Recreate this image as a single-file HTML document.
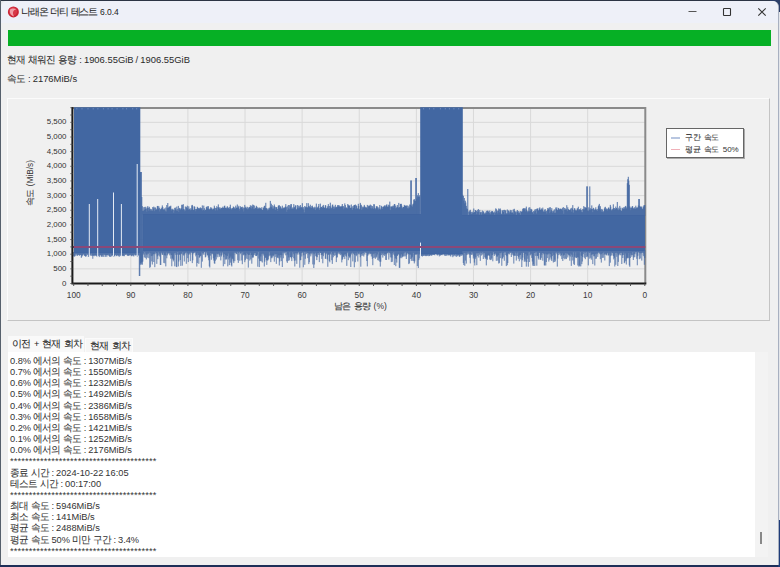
<!DOCTYPE html>
<html><head><meta charset="utf-8"><style>
*{margin:0;padding:0;box-sizing:border-box}
html,body{width:780px;height:567px;overflow:hidden}
body{background:#e4e6ea;font-family:"Liberation Sans",sans-serif;color:#1e1e1e;position:relative}
.win{position:absolute;left:1px;top:1px;width:778px;height:564px;background:#f0f0f0;border-radius:6px 6px 0 0;overflow:hidden;border-right:1px solid #a8b0c0}
.edge{position:absolute}
.title{position:absolute;left:0;top:0;width:778px;height:22px;background:#eef0f8}
.icon{position:absolute;left:7px;top:6.5px;width:10.5px;height:10.5px;border-radius:50%;background:radial-gradient(circle at 40% 35%,#f06060,#c81e1e 70%,#a01515)}
.ttext{position:absolute;left:19.7px;top:4.2px;word-spacing:-0.8px;font-size:8.5px;line-height:14px;color:#222;white-space:nowrap}
.green{position:absolute;left:7px;top:29px;width:763px;height:16px;background:#06b025}
.info{position:absolute;left:6px;font-size:9.7px;line-height:12px;white-space:nowrap;color:#2a2a2a;word-spacing:-0.55px;transform:scaleX(0.97);transform-origin:0 0}
.panel{position:absolute;left:7px;top:98px;width:763px;height:223px;border-top:1px solid #fbfbfb;border-left:1px solid #fbfbfb;border-right:1px solid #c4c4c4;border-bottom:1px solid #c4c4c4}
.plot{position:absolute;left:0;top:0}
.yl{position:absolute;left:20px;width:46.5px;text-align:right;font-size:7.9px;line-height:12px;color:#333}
.xl{position:absolute;top:289px;width:30px;text-align:center;font-size:8.3px;line-height:12px;color:#3a3a3a}
.xt{position:absolute;left:334px;top:300px;font-size:8.5px;line-height:12px;color:#333;white-space:nowrap}
.yt{position:absolute;left:5.2px;top:177px;width:50px;text-align:center;font-size:8.3px;color:#555;line-height:12px;color:#333;white-space:nowrap;transform:rotate(-90deg)}
.legend{position:absolute;left:666px;top:128px;width:78px;height:30px;background:#fff;border:1px solid #666;box-shadow:1px 1px 0 #aaa}
.lg{position:absolute;left:18px;font-size:8px;line-height:10px;white-space:nowrap;color:#333;word-spacing:1px}
.lgl{position:absolute;left:4px;width:9px;height:1.5px}
.tab1{position:absolute;left:8px;top:336px;width:76px;height:17px;background:#f9f9f9;font-size:9.2px;line-height:16px;padding-left:4px;white-space:nowrap;color:#222}
.tab2{position:absolute;left:85px;top:338px;width:48px;height:14px;background:#f6f6f6;border:1px solid #fbfbfb;border-bottom:none;font-size:9.2px;line-height:13px;padding-left:4px;white-space:nowrap;color:#222}
.text{position:absolute;left:8px;top:352px;width:747px;height:205px;background:#fff}
.scroll{position:absolute;left:755px;top:352px;width:13px;height:205px;background:#f3f3f3}
.thumb{position:absolute;left:760px;top:532px;width:1.5px;height:12px;background:#888}
.log{position:absolute;left:9.5px;top:355px;font-size:9.6px;line-height:11.17px;white-space:nowrap;color:#333;word-spacing:-0.6px;transform:scaleX(0.965);transform-origin:0 0}
.ln{height:11.17px}
.ast{letter-spacing:0.16px}
.h{-webkit-text-stroke:0.08px #333}
</style></head><body>
<div class="edge" style="left:0;top:0;width:780px;height:1px;background:#2c3444"></div>
<div class="edge" style="left:0;top:0;width:1px;height:567px;background:#56606c"></div>
<div class="edge" style="left:770px;top:0;width:10px;height:12px;background:#2c3f6a"></div>
<div class="edge" style="left:0;top:565px;width:780px;height:2px;background:#1e2f58"></div>
<div class="edge" style="left:778px;top:520px;width:2px;height:47px;background:#1e3c78"></div>
<div class="win">
 <div class="title">
  <svg style="position:absolute;left:5.2px;top:4.3px" width="14" height="14" viewBox="0 0 14 14">
   <circle cx="7.4" cy="6.9" r="5.5" fill="#c92435"/>
   <circle cx="7.0" cy="6.4" r="4.2" fill="#d83848"/>
   <path d="M4.2 4.5C5.5 3.2 8.5 3.0 10.2 4.2C8.6 4.6 7.2 5.6 7.0 7.4C6.8 9 7.6 10.5 8.2 11.5C6 11.2 4.4 9.6 4.0 7.6C3.8 6.4 3.9 5.2 4.2 4.5Z" fill="#f8c0c8" opacity="0.75"/>
  </svg>
  <div class="ttext"><span class="h" style="font-size:9.6px;position:relative;top:0px"><span style="letter-spacing:-1.1px">나래</span>온</span> <span class="h" style="font-size:9.6px;position:relative;top:0px"><span style="letter-spacing:-1.1px">더</span>티</span> <span class="h" style="font-size:9.6px;position:relative;top:0px"><span style="letter-spacing:-1.1px">테스</span>트</span> 6.0.4</div>
  <svg style="position:absolute;left:0;top:0" width="778" height="22">
   <path d="M687.5 10.5H695.5" stroke="#555" stroke-width="1"/>
   <rect x="722.5" y="7.5" width="7" height="7" rx="0.6" stroke="#333" stroke-width="1.1" fill="none"/>
   <path d="M757.3 7.3L764.7 14.7M764.7 7.3L757.3 14.7" stroke="#333" stroke-width="1.1"/>
  </svg>
 </div>
 <div class="green"></div>
 <div class="info" style="top:53px"><span class="h" style="font-size:10.2px;position:relative;top:0px"><span style="letter-spacing:-0.5px">현</span>재</span> <span class="h" style="font-size:10.2px;position:relative;top:0px"><span style="letter-spacing:-0.5px">채워</span>진</span> <span class="h" style="font-size:10.2px;position:relative;top:0px"><span style="letter-spacing:-0.5px">용</span>량</span> : 1906.55GiB / 1906.55GiB</div>
 <div class="info" style="top:72px"><span class="h" style="font-size:10.2px;position:relative;top:0px"><span style="letter-spacing:-0.5px">속</span>도</span> : 2176MiB/s</div>
</div>
<div class="panel"></div>
<svg class="plot" width="780" height="330" viewBox="0 0 780 330">
<path d="M72.4 268.85H645.3M72.4 254.20H645.3M72.4 239.55H645.3M72.4 224.90H645.3M72.4 210.25H645.3M72.4 195.60H645.3M72.4 180.95H645.3M72.4 166.30H645.3M72.4 151.65H645.3M72.4 137.00H645.3M72.4 122.35H645.3M587.69 108.0V283.5M530.58 108.0V283.5M473.47 108.0V283.5M416.36 108.0V283.5M359.25 108.0V283.5M302.14 108.0V283.5M245.03 108.0V283.5M187.92 108.0V283.5M130.81 108.0V283.5" stroke="#d9d9d9" stroke-width="1" fill="none"/>
<path d="M72.4 108.0H645.3V283.5" stroke="#8a8a8a" stroke-width="2" fill="none"/>
<path d="M74 107.3H140.3V253H74ZM143 214H420.5V251H143ZM420.2 107.3H462.8V254H420.2ZM462.8 215H645V251H462.8Z" fill="#4267a2"/>
<path d="M140.30 172.1V264.7M140.80 172.0V263.0M141.30 172.0V264.5M141.80 197.0V262.2M142.30 206.2V264.7M142.80 211.0V261.6M143.30 210.8V215M143.80 207.2V215M144.30 209.9V215M144.80 206.9V215M145.30 208.8V215M145.80 206.8V215M146.30 208.5V215M146.80 211.5V215M147.30 207.6V215M147.80 206.1V215M148.30 207.8V215M148.80 210.8V215M149.30 206.8V215M149.80 208.5V215M150.30 210.6V215M150.80 208.9V215M151.30 209.3V215M151.80 210.9V215M152.30 210.7V215M152.80 207.0V215M153.30 208.4V215M153.80 206.6V215M154.30 211.1V215M154.80 207.5V215M155.30 207.5V215M155.80 210.1V215M156.30 208.7V215M156.80 210.0V215M157.30 206.1V215M157.80 205.9V215M158.30 208.7V215M158.80 206.2V215M159.30 207.8V215M159.80 211.3V215M160.30 209.1V215M160.80 209.5V215M161.30 207.7V215M161.80 208.9V215M162.30 205.4V215M162.80 207.1V215M163.30 209.9V215M163.80 209.1V215M164.30 208.4V215M164.80 209.9V215M165.30 211.2V215M165.80 207.5V215M166.30 211.4V215M166.80 205.0V215M167.30 208.1V215M167.80 203.0V215M168.30 207.7V215M168.80 207.4V215M169.30 206.3V215M169.80 207.0V215M170.30 206.4V215M170.80 205.7V215M171.30 210.5V215M171.80 208.8V215M172.30 210.0V215M172.80 208.8V215M173.30 209.7V215M173.80 212.8V215M174.30 210.4V215M174.80 207.9V215M175.30 207.6V215M175.80 209.2V215M176.30 210.5V215M176.80 206.6V215M177.30 210.9V215M177.80 208.9V215M178.30 205.9V215M178.80 211.8V215M179.30 207.9V215M179.80 208.7V215M180.30 210.1V215M180.80 208.5V215M181.30 208.4V215M181.80 204.8V215M182.30 204.8V215M182.80 209.6V215M183.30 204.2V215M183.80 209.0V215M184.30 209.6V215M184.80 211.2V215M185.30 206.5V215M185.80 210.6V215M186.30 206.9V215M186.80 207.9V215M187.30 205.7V215M187.80 208.4V215M188.30 209.8V215M188.80 206.3V215M189.30 208.7V215M189.80 209.5V215M190.30 210.3V215M190.80 208.2V215M191.30 209.7V215M191.80 205.4V215M192.30 204.9V215M192.80 206.3V215M193.30 210.1V215M193.80 209.7V215M194.30 206.3V215M194.80 206.8V215M195.30 209.1V215M195.80 211.2V215M196.30 209.1V215M196.80 208.8V215M197.30 206.8V215M197.80 207.6V215M198.30 208.3V215M198.80 208.4V215M199.30 208.4V215M199.80 208.5V215M200.30 207.3V215M200.80 208.2V215M201.30 209.3V215M201.80 208.0V215M202.30 205.4V215M202.80 210.6V215M203.30 210.0V215M203.80 205.6V215M204.30 208.2V215M204.80 210.9V215M205.30 209.9V215M205.80 209.7V215M206.30 207.2V215M206.80 206.6V215M207.30 208.5V215M207.80 206.3V215M208.30 206.2V215M208.80 208.9V215M209.30 210.0V215M209.80 208.8V215M210.30 208.6V215M210.80 207.1V215M211.30 208.7V215M211.80 207.8V215M212.30 209.3V215M212.80 209.7V215M213.30 208.5V215M213.80 209.0V215M214.30 205.7V215M214.80 207.6V215M215.30 210.5V215M215.80 208.0V215M216.30 208.2V215M216.80 206.2V215M217.30 210.3V215M217.80 207.2V215M218.30 204.4V215M218.80 207.7V215M219.30 207.3V215M219.80 209.0V215M220.30 209.2V215M220.80 207.5V215M221.30 208.0V215M221.80 208.3V215M222.30 207.9V215M222.80 206.7V215M223.30 208.0V215M223.80 207.7V215M224.30 206.0V215M224.80 205.6V215M225.30 207.9V215M225.80 207.8V215M226.30 207.6V215M226.80 208.7V215M227.30 206.2V215M227.80 207.3V215M228.30 208.2V215M228.80 207.7V215M229.30 209.0V215M229.80 206.9V215M230.30 204.7V215M230.80 208.5V215M231.30 208.5V215M231.80 209.8V215M232.30 208.2V215M232.80 208.2V215M233.30 206.5V215M233.80 207.0V215M234.30 208.6V215M234.80 207.6V215M235.30 209.0V215M235.80 205.7V215M236.30 207.5V215M236.80 208.0V215M237.30 204.5V215M237.80 207.8V215M238.30 207.2V215M238.80 205.8V215M239.30 208.7V215M239.80 210.6V215M240.30 206.2V215M240.80 207.9V215M241.30 207.0V215M241.80 207.8V215M242.30 206.7V215M242.80 209.1V215M243.30 207.5V215M243.80 211.4V215M244.30 207.9V215M244.80 204.9V215M245.30 207.7V215M245.80 206.7V215M246.30 207.8V215M246.80 208.9V215M247.30 206.8V215M247.80 209.6V215M248.30 208.5V215M248.80 207.5V215M249.30 207.2V215M249.80 207.1V215M250.30 205.3V215M250.80 207.7V215M251.30 205.7V215M251.80 208.6V215M252.30 206.7V215M252.80 204.5V215M253.30 205.1V215M253.80 209.1V215M254.30 205.5V215M254.80 209.0V215M255.30 208.1V215M255.80 207.6V215M256.30 205.8V215M256.80 206.7V215M257.30 208.8V215M257.80 207.3V215M258.30 208.9V215M258.80 208.1V215M259.30 207.5V215M259.80 208.8V215M260.30 207.8V215M260.80 208.5V215M261.30 209.2V215M261.80 207.2V215M262.30 209.9V215M262.80 209.9V215M263.30 207.6V215M263.80 207.7V215M264.30 206.0V215M264.80 205.7V215M265.30 207.8V215M265.80 202.8V215M266.30 208.3V215M266.80 208.1V215M267.30 209.3V215M267.80 210.7V215M268.30 208.4V215M268.80 210.0V215M269.30 207.6V215M269.80 208.4V215M270.30 200.9V215M270.80 206.7V215M271.30 203.7V215M271.80 207.2V215M272.30 205.2V215M272.80 208.8V215M273.30 208.5V215M273.80 206.2V215M274.30 204.5V215M274.80 206.4V215M275.30 209.9V215M275.80 207.1V215M276.30 207.6V215M276.80 207.0V215M277.30 208.9V215M277.80 211.0V215M278.30 205.6V215M278.80 205.6V215M279.30 205.2V215M279.80 208.1V215M280.30 206.2V215M280.80 206.9V215M281.30 209.0V215M281.80 208.1V215M282.30 205.7V215M282.80 208.9V215M283.30 207.6V215M283.80 208.3V215M284.30 207.6V215M284.80 207.6V215M285.30 206.6V215M285.80 204.1V215M286.30 207.2V215M286.80 211.7V215M287.30 206.3V215M287.80 209.9V215M288.30 205.0V215M288.80 208.3V215M289.30 205.1V215M289.80 209.3V215M290.30 206.4V215M290.80 204.3V215M291.30 204.1V215M291.80 208.8V215M292.30 208.6V215M292.80 207.3V215M293.30 208.6V215M293.80 204.1V215M294.30 206.9V215M294.80 207.9V215M295.30 205.3V215M295.80 205.7V215M296.30 209.9V215M296.80 208.9V215M297.30 205.0V215M297.80 207.6V215M298.30 205.6V215M298.80 208.4V215M299.30 207.5V215M299.80 206.1V215M300.30 205.0V215M300.80 207.4V215M301.30 207.7V215M301.80 206.9V215M302.30 203.2V215M302.80 208.3V215M303.30 207.1V215M303.80 209.4V215M304.30 212.3V215M304.80 206.0V215M305.30 207.4V215M305.80 206.7V215M306.30 207.3V215M306.80 203.1V215M307.30 207.1V215M307.80 208.0V215M308.30 203.2V215M308.80 206.0V215M309.30 206.4V215M309.80 207.4V215M310.30 204.7V215M310.80 207.4V215M311.30 208.0V215M311.80 206.1V215M312.30 205.6V215M312.80 207.2V215M313.30 207.5V215M313.80 209.0V215M314.30 207.8V215M314.80 206.7V215M315.30 210.1V215M315.80 207.4V215M316.30 203.6V215M316.80 208.5V215M317.30 207.3V215M317.80 207.7V215M318.30 206.2V215M318.80 204.0V215M319.30 209.9V215M319.80 208.1V215M320.30 203.6V215M320.80 207.5V215M321.30 206.9V215M321.80 206.9V215M322.30 208.0V215M322.80 205.9V215M323.30 204.9V215M323.80 207.0V215M324.30 208.0V215M324.80 207.7V215M325.30 205.1V215M325.80 205.6V215M326.30 208.4V215M326.80 208.3V215M327.30 207.6V215M327.80 206.2V215M328.30 204.1V215M328.80 208.5V215M329.30 206.0V215M329.80 208.5V215M330.30 202.7V215M330.80 206.4V215M331.30 208.5V215M331.80 207.7V215M332.30 204.8V215M332.80 204.6V215M333.30 206.6V215M333.80 209.0V215M334.30 206.5V215M334.80 208.3V215M335.30 204.8V215M335.80 207.3V215M336.30 206.9V215M336.80 207.6V215M337.30 206.4V215M337.80 205.0V215M338.30 205.2V215M338.80 206.7V215M339.30 205.4V215M339.80 206.9V215M340.30 206.2V215M340.80 207.0V215M341.30 206.7V215M341.80 205.8V215M342.30 204.0V215M342.80 206.5V215M343.30 206.1V215M343.80 209.2V215M344.30 207.5V215M344.80 203.4V215M345.30 205.1V215M345.80 208.1V215M346.30 207.3V215M346.80 208.1V215M347.30 208.5V215M347.80 204.0V215M348.30 204.9V215M348.80 205.9V215M349.30 206.0V215M349.80 205.2V215M350.30 208.0V215M350.80 207.7V215M351.30 204.5V215M351.80 207.6V215M352.30 209.8V215M352.80 206.2V215M353.30 208.0V215M353.80 205.5V215M354.30 205.1V215M354.80 205.0V215M355.30 204.5V215M355.80 209.1V215M356.30 205.4V215M356.80 206.2V215M357.30 208.2V215M357.80 209.0V215M358.30 203.8V215M358.80 206.0V215M359.30 209.6V215M359.80 208.8V215M360.30 202.9V215M360.80 204.5V215M361.30 205.2V215M361.80 209.9V215M362.30 206.7V215M362.80 208.3V215M363.30 206.6V215M363.80 207.6V215M364.30 204.9V215M364.80 206.2V215M365.30 207.1V215M365.80 207.8V215M366.30 207.7V215M366.80 207.3V215M367.30 204.9V215M367.80 208.7V215M368.30 205.7V215M368.80 206.8V215M369.30 205.6V215M369.80 205.8V215M370.30 204.6V215M370.80 208.1V215M371.30 205.4V215M371.80 208.7V215M372.30 206.0V215M372.80 207.6V215M373.30 209.0V215M373.80 204.2V215M374.30 204.3V215M374.80 207.8V215M375.30 209.3V215M375.80 208.3V215M376.30 206.1V215M376.80 206.8V215M377.30 206.4V215M377.80 208.2V215M378.30 209.6V215M378.80 207.3V215M379.30 208.8V215M379.80 205.0V215M380.30 209.9V215M380.80 208.6V215M381.30 205.8V215M381.80 206.6V215M382.30 208.9V215M382.80 207.1V215M383.30 206.4V215M383.80 207.0V215M384.30 205.8V215M384.80 205.3V215M385.30 207.1V215M385.80 205.7V215M386.30 205.2V215M386.80 204.3V215M387.30 206.5V215M387.80 206.9V215M388.30 204.7V215M388.80 206.6V215M389.30 205.3V215M389.80 201.6V215M390.30 210.1V215M390.80 206.5V215M391.30 206.5V215M391.80 206.6V215M392.30 207.2V215M392.80 205.8V215M393.30 205.6V215M393.80 207.7V215M394.30 204.1V215M394.80 204.0V215M395.30 205.6V215M395.80 208.4V215M396.30 208.0V215M396.80 206.7V215M397.30 205.0V215M397.80 206.9V215M398.30 207.9V215M398.80 202.9V215M399.30 207.5V215M399.80 207.0V215M400.30 203.9V215M400.80 204.1V215M401.30 203.8V215M401.80 205.7V215M402.30 208.3V215M402.80 207.4V215M403.30 207.0V215M403.80 206.9V215M404.30 204.9V215M404.80 205.9V215M405.30 205.6V215M405.80 205.8V215M406.30 206.2V215M406.80 205.3V215M407.30 208.2V215M407.80 205.6V215M408.30 208.4V215M408.80 206.3V215M409.30 207.6V215M409.80 204.5V215M410.30 204.8V215M410.80 180.5V215M411.30 180.5V215M411.80 205.6V215M412.30 206.7V215M412.80 204.4V215M413.30 203.6V215M413.80 199.7V215M414.30 199.1V215M414.80 200.5V215M415.30 201.0V215M415.80 178.0V215M416.30 178.0V215M416.80 198.6V215M417.30 195.2V215M417.80 196.6V215M418.30 193.1V215M418.80 196.7V215M419.30 196.6V215M419.80 195.2V215M462.80 194.8V216M463.30 196.0V216M463.80 200.6V216M464.30 198.0V216M464.80 203.4V216M465.30 200.7V216M465.80 202.5V216M466.30 205.9V216M466.80 208.4V216M467.30 209.0V216M467.80 189.0V216M468.80 211.6V216M469.30 210.6V216M469.80 212.2V216M470.30 209.8V216M470.80 211.5V216M471.30 213.9V216M471.80 211.9V216M472.30 213.4V216M472.80 211.6V216M473.30 213.0V216M473.80 208.5V216M474.30 212.2V216M474.80 212.1V216M475.30 210.2V216M475.80 210.1V216M476.30 211.0V216M476.80 214.2V216M477.30 211.7V216M477.80 210.0V216M478.30 209.0V216M478.80 211.5V216M479.30 214.7V216M479.80 209.9V216M480.30 212.0V216M480.80 212.8V216M481.30 214.6V216M481.80 211.9V216M482.30 210.5V216M482.80 213.4V216M483.30 211.4V216M483.80 211.6V216M484.30 213.9V216M484.80 213.2V216M485.30 213.6V216M485.80 212.3V216M486.30 210.8V216M486.80 213.1V216M487.30 211.0V216M487.80 210.4V216M488.30 211.8V216M488.80 211.3V216M489.30 213.1V216M489.80 210.5V216M490.30 214.2V216M490.80 212.3V216M491.30 212.0V216M491.80 210.9V216M492.30 211.0V216M492.80 211.7V216M493.30 212.5V216M493.80 212.8V216M494.30 211.4V216M494.80 214.9V216M495.30 212.6V216M495.80 208.3V216M496.30 209.2V216M496.80 211.6V216M497.30 210.6V216M497.80 213.4V216M498.30 210.7V216M498.80 208.4V216M499.30 209.2V216M499.80 212.4V216M500.30 208.5V216M500.80 210.2V216M501.30 213.7V216M501.80 214.3V216M502.30 210.6V216M502.80 210.2V216M503.30 212.0V216M503.80 210.1V216M504.30 209.8V216M504.80 214.1V216M505.30 210.5V216M505.80 210.3V216M506.30 213.6V216M506.80 213.3V216M507.30 209.5V216M507.80 213.5V216M508.30 210.4V216M508.80 210.9V216M509.30 213.4V216M509.80 211.6V216M510.30 209.9V216M510.80 211.5V216M511.30 212.8V216M511.80 210.2V216M512.30 212.5V216M512.80 212.6V216M513.30 209.4V216M513.80 213.8V216M514.30 208.8V216M514.80 211.0V216M515.30 211.5V216M515.80 212.5V216M516.30 214.9V216M516.80 211.3V216M517.30 210.0V216M517.80 211.9V216M518.30 211.1V216M518.80 213.1V216M519.30 213.1V216M519.80 211.4V216M520.30 214.8V216M520.80 211.0V216M521.30 211.6V216M521.80 212.0V216M522.30 211.2V216M522.80 208.8V216M523.30 208.4V216M523.80 208.3V216M524.30 209.3V216M524.80 208.1V216M525.30 211.3V216M525.80 208.5V216M526.30 206.6V216M526.80 209.8V216M527.30 211.2V216M527.80 212.3V216M528.30 211.2V216M528.80 207.6V216M529.30 211.3V216M529.80 207.2V216M530.30 211.1V216M530.80 208.8V216M531.30 209.4V216M531.80 209.5V216M532.30 212.3V216M532.80 212.2V216M533.30 211.0V216M533.80 213.9V216M534.30 211.4V216M534.80 209.5V216M535.30 210.8V216M535.80 209.1V216M536.30 213.5V216M536.80 208.7V216M537.30 209.0V216M537.80 208.2V216M538.30 210.8V216M538.80 210.1V216M539.30 208.5V216M539.80 207.4V216M540.30 209.7V216M540.80 209.9V216M541.30 208.4V216M541.80 209.6V216M542.30 209.5V216M542.80 207.6V216M543.30 211.4V216M543.80 211.6V216M544.30 209.6V216M544.80 211.6V216M545.30 209.2V216M545.80 211.6V216M546.30 211.0V216M546.80 213.5V216M547.30 210.0V216M547.80 208.0V216M548.30 208.5V216M548.80 209.7V216M549.30 207.4V216M549.80 213.1V216M550.30 207.2V216M550.80 211.5V216M551.30 210.1V216M551.80 208.1V216M552.30 211.2V216M552.80 213.0V216M553.30 211.4V216M553.80 210.5V216M554.30 209.3V216M554.80 213.0V216M555.30 212.6V216M555.80 207.5V216M556.30 209.0V216M556.80 207.4V216M557.30 209.8V216M557.80 210.4V216M558.30 207.9V216M558.80 208.3V216M559.30 209.8V216M559.80 209.1V216M560.30 208.5V216M560.80 209.0V216M561.30 209.6V216M561.80 209.1V216M562.30 207.9V216M562.80 210.7V216M563.30 207.1V216M563.80 213.8V216M564.30 207.9V216M564.80 209.9V216M565.30 208.4V216M565.80 209.8V216M566.30 209.3V216M566.80 205.2V216M567.30 211.1V216M567.80 207.3V216M568.30 209.1V216M568.80 209.8V216M569.30 210.1V216M569.80 209.9V216M570.30 209.6V216M570.80 208.4V216M571.30 211.5V216M571.80 207.8V216M572.30 208.8V216M572.80 205.1V216M573.30 212.6V216M573.80 210.1V216M574.30 208.4V216M574.80 208.2V216M575.30 209.7V216M575.80 210.9V216M576.30 210.9V216M576.80 209.7V216M577.30 208.1V216M577.80 209.2V216M578.30 206.7V216M578.80 210.5V216M579.30 209.5V216M579.80 209.1V216M580.30 210.1V216M580.80 208.3V216M581.30 210.1V216M581.80 211.8V216M582.30 212.2V216M582.80 208.9V216M583.30 209.4V216M583.80 206.1V216M584.30 209.5V216M584.80 207.1V216M585.30 207.3V216M585.80 208.3V216M586.30 207.8V216M586.80 186.4V216M587.30 186.4V216M587.80 210.4V216M588.30 211.1V216M588.80 207.3V216M589.30 209.7V216M589.80 186.4V216M590.30 208.2V216M590.80 210.1V216M591.30 208.9V216M591.80 205.4V216M592.30 209.0V216M592.80 212.1V216M593.30 207.8V216M593.80 208.4V216M594.30 209.6V216M594.80 210.3V216M595.30 209.2V216M595.80 207.3V216M596.30 209.3V216M596.80 210.1V216M597.30 211.0V216M597.80 208.9V216M598.30 206.3V216M598.80 205.4V216M599.30 203.9V216M599.80 208.5V216M600.30 206.2V216M600.80 209.7V216M601.30 211.5V216M601.80 208.9V216M602.30 209.6V216M602.80 211.7V216M603.30 212.2V216M603.80 211.0V216M604.30 208.8V216M604.80 207.5V216M605.30 206.8V216M605.80 209.7V216M606.30 208.4V216M606.80 209.3V216M607.30 210.5V216M607.80 208.9V216M608.30 207.9V216M608.80 207.4V216M609.30 209.5V216M609.80 208.7V216M610.30 204.9V216M610.80 206.7V216M611.30 209.6V216M611.80 211.0V216M612.30 209.7V216M612.80 208.8V216M613.30 204.3V216M613.80 208.1V216M614.30 208.1V216M614.80 209.9V216M615.30 208.9V216M615.80 206.6V216M616.30 208.0V216M616.80 208.3V216M617.30 202.0V216M617.80 209.3V216M618.30 210.2V216M618.80 207.7V216M619.30 209.2V216M619.80 205.9V216M620.30 210.1V216M620.80 207.7V216M621.30 210.9V216M621.80 210.7V216M622.30 207.8V216M622.80 208.7V216M623.30 209.0V216M623.80 207.3V216M624.30 207.3V216M624.80 209.0V216M625.30 206.4V216M625.80 205.9V216M626.30 208.6V216M626.80 207.3V216M627.30 183.2V216M627.80 179.2V216M628.30 176.8V216M628.80 180.8V216M629.30 184.8V216M629.80 206.3V216M630.30 207.7V216M630.80 210.2V216M631.30 207.4V216M631.80 207.9V216M632.30 206.0V216M632.80 206.6V216M633.30 208.2V216M633.80 208.7V216M634.30 208.4V216M634.80 207.1V216M635.30 208.9V216M635.80 205.7V216M636.30 208.3V216M636.80 207.3V216M637.30 208.1V216M637.80 207.3V216M638.30 205.5V216M638.80 199.0V216M639.30 199.0V216M639.80 205.9V216M640.30 206.6V216M640.80 206.9V216M641.30 207.4V216M641.80 206.4V216M642.30 209.2V216M642.80 208.5V216M643.30 207.1V216M643.80 205.5V216M644.30 205.4V216M644.80 205.0V216" stroke="#4267a2" stroke-width="0.9" fill="none"/>
<path d="M73.80 252V256.3M74.30 252V256.6M74.80 252V256.4M75.30 252V255.7M75.80 252V254.0M76.30 252V253.9M76.80 252V255.4M77.30 252V256.0M77.80 252V254.9M78.30 252V254.8M78.80 252V254.8M79.30 252V255.8M79.80 252V255.3M80.30 252V254.9M80.80 252V254.9M81.30 252V257.9M81.80 252V256.8M82.30 252V255.8M82.80 252V255.1M83.30 252V254.4M83.80 252V254.2M84.30 252V255.7M84.80 252V255.8M85.30 252V256.2M85.80 252V256.9M86.30 252V256.1M86.80 252V253.7M87.30 252V254.9M87.80 252V254.3M88.30 252V256.9M88.80 252V256.2M89.30 252V255.1M89.80 252V255.1M90.30 252V254.5M90.80 252V255.8M91.30 252V253.7M91.80 252V255.8M92.30 252V255.6M92.80 252V258.8M93.30 252V256.0M93.80 252V255.0M94.30 252V256.2M94.80 252V255.1M95.30 252V255.5M95.80 252V255.6M96.30 252V255.7M96.80 252V256.6M97.30 252V255.7M97.80 252V255.1M98.30 252V255.9M98.80 252V255.8M99.30 252V257.1M99.80 252V255.5M100.30 252V254.9M100.80 252V255.4M101.30 252V256.9M101.80 252V256.3M102.30 252V255.3M102.80 252V256.9M103.30 252V254.5M103.80 252V256.8M104.30 252V254.7M104.80 252V254.7M105.30 252V256.9M105.80 252V255.4M106.30 252V255.0M106.80 252V256.8M107.30 252V255.3M107.80 252V254.9M108.30 252V254.6M108.80 252V255.7M109.30 252V256.2M109.80 252V256.8M110.30 252V256.9M110.80 252V253.7M111.30 252V256.5M111.80 252V255.5M112.30 252V255.6M112.80 252V255.0M113.30 252V256.5M113.80 252V255.5M114.30 252V256.2M114.80 252V256.3M115.30 252V255.0M115.80 252V254.4M116.30 252V255.8M116.80 252V256.2M117.30 252V255.3M117.80 252V255.2M118.30 252V255.6M118.80 252V256.3M119.30 252V256.7M119.80 252V254.7M120.30 252V256.1M120.80 252V254.7M121.30 252V255.4M121.80 252V255.3M122.30 252V255.6M122.80 252V256.1M123.30 252V255.5M123.80 252V256.1M124.30 252V256.2M124.80 252V254.2M125.30 252V254.9M125.80 252V254.4M126.30 252V254.3M126.80 252V254.7M127.30 252V255.7M127.80 252V255.5M128.30 252V255.9M128.80 252V255.5M129.30 252V255.5M129.80 252V254.9M130.30 252V255.3M130.80 252V254.5M131.30 252V255.9M131.80 252V256.3M132.30 252V255.4M132.80 252V255.3M133.30 252V255.7M133.80 252V256.5M134.30 252V254.0M134.80 252V255.0M135.30 252V255.6M135.80 252V254.9M136.30 252V255.3M136.80 252V254.4M137.30 252V256.5M137.80 252V255.7M138.30 252V255.5M138.80 252V254.7M139.30 252V276.0M139.80 252V276.0M143.30 250V253.4M143.80 250V254.5M144.30 250V257.4M144.80 250V252.0M145.30 250V257.9M145.80 250V253.6M146.30 250V259.4M146.80 250V254.7M147.30 250V257.7M147.80 250V253.6M148.30 250V253.7M148.80 250V258.2M149.30 250V252.7M149.80 250V267.9M150.30 250V266.9M150.80 250V253.3M151.30 250V256.1M151.80 250V261.4M152.30 250V264.5M152.80 250V255.7M153.30 250V254.1M153.80 250V262.0M154.30 250V253.9M154.80 250V267.2M155.30 250V252.3M155.80 250V253.8M156.30 250V253.2M156.80 250V263.9M157.30 250V256.4M157.80 250V259.2M158.30 250V252.3M158.80 250V255.5M159.30 250V253.7M159.80 250V256.5M160.30 250V265.0M160.80 250V265.0M161.30 250V252.5M161.80 250V253.5M162.30 250V254.9M162.80 250V254.6M163.30 250V252.7M163.80 250V262.9M164.30 250V255.2M164.80 250V263.3M165.30 250V255.5M165.80 250V266.4M166.30 250V252.6M166.80 250V258.3M167.30 250V255.4M167.80 250V253.5M168.30 250V253.6M168.80 250V252.7M169.30 250V253.4M169.80 250V255.4M170.30 250V253.5M170.80 250V258.7M171.30 250V255.0M171.80 250V266.3M172.30 250V258.3M172.80 250V259.4M173.30 250V261.4M173.80 250V259.9M174.30 250V253.4M174.80 250V266.3M175.30 250V252.8M175.80 250V254.7M176.30 250V266.7M176.80 250V267.1M177.30 250V254.6M177.80 250V252.0M178.30 250V266.4M178.80 250V261.5M179.30 250V254.6M179.80 250V254.5M180.30 250V260.0M180.80 250V265.9M181.30 250V253.7M181.80 250V253.7M182.30 250V265.7M182.80 250V252.1M183.30 250V254.7M183.80 250V255.7M184.30 250V261.5M184.80 250V254.2M185.30 250V253.2M185.80 250V252.4M186.30 250V263.8M186.80 250V252.5M187.30 250V253.5M187.80 250V258.2M188.30 250V262.1M188.80 250V254.6M189.30 250V252.9M189.80 250V254.2M190.30 250V261.1M190.80 250V252.6M191.30 250V252.2M191.80 250V253.2M192.30 250V263.1M192.80 250V260.3M193.30 250V253.3M193.80 250V253.3M194.30 250V252.1M194.80 250V253.1M195.30 250V252.4M195.80 250V256.4M196.30 250V254.9M196.80 250V266.6M197.30 250V263.0M197.80 250V253.2M198.30 250V255.0M198.80 250V263.8M199.30 250V257.6M199.80 250V257.4M200.30 250V256.1M200.80 250V255.7M201.30 250V267.8M201.80 250V252.3M202.30 250V261.6M202.80 250V253.4M203.30 250V253.4M203.80 250V254.7M204.30 250V252.2M204.80 250V252.2M205.30 250V257.4M205.80 250V256.8M206.30 250V252.1M206.80 250V253.5M207.30 250V255.5M207.80 250V255.1M208.30 250V257.6M208.80 250V260.3M209.30 250V266.3M209.80 250V267.5M210.30 250V255.7M210.80 250V253.0M211.30 250V259.8M211.80 250V253.8M212.30 250V253.3M212.80 250V254.1M213.30 250V258.3M213.80 250V260.5M214.30 250V263.3M214.80 250V263.8M215.30 250V260.8M215.80 250V256.7M216.30 250V259.5M216.80 250V253.6M217.30 250V254.1M217.80 250V257.3M218.30 250V253.4M218.80 250V254.4M219.30 250V256.9M219.80 250V255.5M220.30 250V252.6M220.80 250V260.4M221.30 250V256.5M221.80 250V255.2M222.30 250V252.2M222.80 250V253.5M223.30 250V266.3M223.80 250V257.2M224.30 250V254.0M224.80 250V264.1M225.30 250V259.5M225.80 250V255.3M226.30 250V259.6M226.80 250V258.8M227.30 250V256.1M227.80 250V266.4M228.30 250V253.5M228.80 250V259.5M229.30 250V265.1M229.80 250V258.0M230.30 250V262.7M230.80 250V256.6M231.30 250V265.3M231.80 250V266.5M232.30 250V258.5M232.80 250V259.3M233.30 250V261.4M233.80 250V263.1M234.30 250V252.7M234.80 250V261.2M235.30 250V252.6M235.80 250V253.3M236.30 250V253.8M236.80 250V254.1M237.30 250V252.2M237.80 250V260.2M238.30 250V262.9M238.80 250V253.0M239.30 250V252.0M239.80 250V260.8M240.30 250V253.7M240.80 250V253.3M241.30 250V252.5M241.80 250V260.5M242.30 250V264.2M242.80 250V252.1M243.30 250V254.6M243.80 250V255.4M244.30 250V254.4M244.80 250V262.2M245.30 250V260.2M245.80 250V255.4M246.30 250V258.7M246.80 250V252.9M247.30 250V254.2M247.80 250V259.2M248.30 250V267.6M248.80 250V255.1M249.30 250V254.7M249.80 250V260.6M250.30 250V252.8M250.80 250V259.4M251.30 250V255.0M251.80 250V263.7M252.30 250V257.6M252.80 250V257.4M253.30 250V257.5M253.80 250V255.3M254.30 250V253.1M254.80 250V254.7M255.30 250V253.0M255.80 250V256.0M256.30 250V255.9M256.80 250V256.1M257.30 250V254.7M257.80 250V266.7M258.30 250V252.1M258.80 250V258.6M259.30 250V267.1M259.80 250V260.9M260.30 250V261.1M260.80 250V256.5M261.30 250V261.4M261.80 250V253.9M262.30 250V262.5M262.80 250V253.6M263.30 250V253.8M263.80 250V255.6M264.30 250V266.5M264.80 250V261.7M265.30 250V257.5M265.80 250V257.9M266.30 250V260.2M266.80 250V264.9M267.30 250V260.4M267.80 250V260.5M268.30 250V259.4M268.80 250V256.5M269.30 250V252.3M269.80 250V255.7M270.30 250V255.5M270.80 250V262.1M271.30 250V257.6M271.80 250V258.3M272.30 250V255.6M272.80 250V257.4M273.30 250V256.1M273.80 250V255.1M274.30 250V261.7M274.80 250V253.7M275.30 250V254.2M275.80 250V256.9M276.30 250V263.9M276.80 250V254.0M277.30 250V257.9M277.80 250V257.2M278.30 250V258.3M278.80 250V255.4M279.30 250V265.5M279.80 250V261.5M280.30 250V255.0M280.80 250V257.6M281.30 250V261.1M281.80 250V255.3M282.30 250V267.0M282.80 250V252.6M283.30 250V258.3M283.80 250V252.5M284.30 250V253.5M284.80 250V252.3M285.30 250V252.5M285.80 250V255.4M286.30 250V252.1M286.80 250V261.4M287.30 250V262.9M287.80 250V254.5M288.30 250V260.8M288.80 250V257.5M289.30 250V260.4M289.80 250V252.3M290.30 250V257.1M290.80 250V257.1M291.30 250V258.4M291.80 250V261.1M292.30 250V256.9M292.80 250V252.2M293.30 250V253.8M293.80 250V258.3M294.30 250V260.8M294.80 250V266.5M295.30 250V253.3M295.80 250V260.6M296.30 250V253.5M296.80 250V263.9M297.30 250V253.2M297.80 250V254.5M298.30 250V252.3M298.80 250V252.6M299.30 250V254.3M299.80 250V267.7M300.30 250V260.3M300.80 250V260.0M301.30 250V253.1M301.80 250V256.5M302.30 250V252.4M302.80 250V252.7M303.30 250V267.3M303.80 250V255.3M304.30 250V252.2M304.80 250V264.8M305.30 250V258.8M305.80 250V252.3M306.30 250V254.0M306.80 250V252.6M307.30 250V253.0M307.80 250V258.2M308.30 250V253.4M308.80 250V264.1M309.30 250V262.2M309.80 250V254.3M310.30 250V253.4M310.80 250V256.4M311.30 250V252.9M311.80 250V254.2M312.30 250V252.7M312.80 250V264.4M313.30 250V253.6M313.80 250V268.0M314.30 250V264.5M314.80 250V253.9M315.30 250V252.8M315.80 250V256.1M316.30 250V256.7M316.80 250V260.1M317.30 250V257.2M317.80 250V253.3M318.30 250V253.2M318.80 250V254.9M319.30 250V262.1M319.80 250V252.1M320.30 250V253.1M320.80 250V253.0M321.30 250V255.2M321.80 250V258.9M322.30 250V254.6M322.80 250V263.3M323.30 250V256.2M323.80 250V253.4M324.30 250V252.2M324.80 250V253.2M325.30 250V258.7M325.80 250V258.9M326.30 250V253.8M326.80 250V252.8M327.30 250V259.5M327.80 250V266.8M328.30 250V254.8M328.80 250V254.3M329.30 250V261.0M329.80 250V262.3M330.30 250V253.6M330.80 250V254.5M331.30 250V252.1M331.80 250V260.2M332.30 250V263.9M332.80 250V253.7M333.30 250V257.3M333.80 250V255.1M334.30 250V252.7M334.80 250V256.0M335.30 250V252.7M335.80 250V254.9M336.30 250V262.1M336.80 250V257.8M337.30 250V257.2M337.80 250V253.5M338.30 250V252.1M338.80 250V253.5M339.30 250V253.9M339.80 250V252.4M340.30 250V255.2M340.80 250V253.4M341.30 250V254.4M341.80 250V262.4M342.30 250V259.8M342.80 250V258.8M343.30 250V256.8M343.80 250V256.7M344.30 250V254.6M344.80 250V259.1M345.30 250V254.1M345.80 250V255.8M346.30 250V256.7M346.80 250V265.9M347.30 250V253.3M347.80 250V252.1M348.30 250V260.2M348.80 250V256.0M349.30 250V257.0M349.80 250V258.2M350.30 250V256.5M350.80 250V267.0M351.30 250V254.3M351.80 250V253.0M352.30 250V252.6M352.80 250V261.4M353.30 250V253.9M353.80 250V253.1M354.30 250V267.3M354.80 250V254.9M355.30 250V262.2M355.80 250V253.2M356.30 250V256.2M356.80 250V254.9M357.30 250V252.6M357.80 250V261.5M358.30 250V254.1M358.80 250V253.0M359.30 250V254.4M359.80 250V252.3M360.30 250V257.3M360.80 250V266.7M361.30 250V254.0M361.80 250V255.8M362.30 250V253.4M362.80 250V255.6M363.30 250V253.1M363.80 250V256.5M364.30 250V252.4M364.80 250V254.4M365.30 250V252.2M365.80 250V252.9M366.30 250V252.8M366.80 250V261.0M367.30 250V266.4M367.80 250V255.9M368.30 250V253.7M368.80 250V254.5M369.30 250V252.7M369.80 250V253.7M370.30 250V254.0M370.80 250V253.1M371.30 250V256.5M371.80 250V253.9M372.30 250V258.9M372.80 250V265.2M373.30 250V253.8M373.80 250V258.0M374.30 250V253.6M374.80 250V257.5M375.30 250V258.9M375.80 250V253.2M376.30 250V257.6M376.80 250V256.6M377.30 250V254.4M377.80 250V260.2M378.30 250V252.3M378.80 250V260.6M379.30 250V258.5M379.80 250V261.7M380.30 250V266.6M380.80 250V261.7M381.30 250V255.1M381.80 250V252.8M382.30 250V253.7M382.80 250V257.6M383.30 250V254.9M383.80 250V252.8M384.30 250V256.0M384.80 250V254.4M385.30 250V254.2M385.80 250V259.9M386.30 250V260.0M386.80 250V253.9M387.30 250V253.2M387.80 250V252.7M388.30 250V252.4M388.80 250V259.6M389.30 250V252.6M389.80 250V253.2M390.30 250V257.4M390.80 250V253.6M391.30 250V262.1M391.80 250V257.6M392.30 250V261.8M392.80 250V253.1M393.30 250V254.5M393.80 250V252.2M394.30 250V265.0M394.80 250V255.8M395.30 250V258.4M395.80 250V266.2M396.30 250V259.1M396.80 250V262.6M397.30 250V256.0M397.80 250V255.2M398.30 250V253.9M398.80 250V254.4M399.30 250V267.8M399.80 250V267.9M400.30 250V258.2M400.80 250V256.7M401.30 250V254.3M401.80 250V258.2M402.30 250V256.8M402.80 250V256.6M403.30 250V256.4M403.80 250V253.6M404.30 250V256.4M404.80 250V252.7M405.30 250V252.4M405.80 250V256.4M406.30 250V259.0M406.80 250V254.7M407.30 250V252.8M407.80 250V253.5M408.30 250V254.0M408.80 250V264.1M409.30 250V263.3M409.80 250V254.3M410.30 250V254.6M410.80 250V259.0M411.30 250V260.9M411.80 250V258.2M412.30 250V256.8M412.80 250V260.9M413.30 250V252.9M413.80 250V261.1M414.30 250V263.4M414.80 250V261.4M415.30 250V254.7M415.80 250V254.2M416.30 250V254.5M416.80 250V254.4M417.30 250V266.1M417.80 250V253.8M418.30 250V268.0M418.80 250V260.1M419.30 250V253.8M419.80 250V258.3M420.30 253V255.0M420.80 253V255.9M421.30 253V255.7M421.80 253V256.0M422.30 253V256.6M422.80 253V255.7M423.30 253V255.5M423.80 253V256.0M424.30 253V254.8M424.80 253V255.9M425.30 253V255.4M425.80 253V256.1M426.30 253V256.1M426.80 253V255.2M427.30 253V255.8M427.80 253V255.6M428.30 253V254.6M428.80 253V256.2M429.30 253V256.0M429.80 253V255.6M430.30 253V255.2M430.80 253V255.3M431.30 253V255.3M431.80 253V255.8M432.30 253V254.8M432.80 253V254.7M433.30 253V254.8M433.80 253V254.8M434.30 253V254.8M434.80 253V255.3M436.30 253V254.5M436.80 253V254.3M437.30 253V255.5M437.80 253V255.1M438.80 253V254.9M439.30 253V256.4M439.80 253V254.9M440.30 253V255.7M440.80 253V255.1M441.30 253V255.1M441.80 253V255.0M442.30 253V254.0M442.80 253V255.2M443.30 253V254.3M443.80 253V254.0M444.30 253V254.8M444.80 253V255.9M445.30 253V254.4M445.80 253V256.0M446.30 253V254.7M446.80 253V255.7M447.80 253V255.1M448.30 253V255.5M448.80 253V254.9M449.30 253V255.2M449.80 253V255.2M450.30 253V255.7M450.80 253V256.6M451.30 253V255.0M452.30 253V255.3M452.80 253V257.2M453.30 253V254.5M453.80 253V256.3M454.30 253V255.6M454.80 253V255.1M455.30 253V254.2M455.80 253V256.2M456.30 253V256.9M456.80 253V254.7M457.30 253V255.5M457.80 253V256.3M458.30 253V255.2M458.80 253V255.2M459.30 253V256.5M459.80 253V256.9M460.30 253V255.8M460.80 253V254.5M461.30 253V254.4M461.80 253V256.0M462.30 253V255.1M462.80 250V253.3M463.30 250V263.0M463.80 250V265.0M464.30 250V253.0M464.80 250V265.8M465.30 250V260.6M465.80 250V253.4M466.30 250V263.6M466.80 250V255.1M467.30 250V252.7M467.80 250V254.4M468.30 250V253.8M468.80 250V252.4M469.30 250V254.5M469.80 250V257.8M470.30 250V263.4M470.80 250V254.1M471.30 250V254.9M471.80 250V252.0M472.30 250V254.6M472.80 250V252.7M473.30 250V258.5M473.80 250V256.4M474.30 250V262.6M474.80 250V265.5M475.30 250V258.8M475.80 250V257.2M476.30 250V253.4M476.80 250V265.2M477.30 250V253.4M477.80 250V256.1M478.30 250V253.0M478.80 250V257.6M479.30 250V254.6M479.80 250V252.7M480.30 250V260.9M480.80 250V252.5M481.30 250V255.6M481.80 250V252.9M482.30 250V254.5M482.80 250V252.1M483.30 250V259.0M483.80 250V253.5M484.30 250V253.2M484.80 250V257.3M485.30 250V258.9M485.80 250V257.7M486.30 250V265.4M486.80 250V258.8M487.30 250V259.8M487.80 250V255.8M488.30 250V255.4M488.80 250V254.9M489.30 250V255.9M489.80 250V259.4M490.30 250V260.1M490.80 250V253.4M491.30 250V259.7M491.80 250V258.3M492.30 250V255.0M492.80 250V261.3M493.30 250V252.0M493.80 250V253.7M494.30 250V255.9M494.80 250V254.0M495.30 250V253.2M495.80 250V254.6M496.30 250V260.9M496.80 250V256.5M497.30 250V256.6M497.80 250V260.7M498.30 250V255.3M498.80 250V263.6M499.30 250V262.9M499.80 250V253.1M500.30 250V258.2M500.80 250V253.3M501.30 250V252.6M501.80 250V265.8M502.30 250V258.4M502.80 250V258.5M503.30 250V256.8M503.80 250V252.9M504.30 250V260.8M504.80 250V252.2M505.30 250V252.5M505.80 250V255.1M506.30 250V266.1M506.80 250V256.1M507.30 250V265.2M507.80 250V263.0M508.30 250V253.7M508.80 250V253.4M509.30 250V254.3M509.80 250V252.3M510.30 250V253.1M510.80 250V252.4M511.30 250V257.0M511.80 250V252.6M512.30 250V254.6M512.80 250V253.0M513.30 250V255.6M513.80 250V263.6M514.30 250V255.5M514.80 250V255.9M515.30 250V252.7M515.80 250V255.8M516.30 250V260.6M516.80 250V253.4M517.30 250V256.0M517.80 250V252.5M518.30 250V258.8M518.80 250V257.0M519.30 250V261.3M519.80 250V255.4M520.30 250V254.9M520.80 250V259.3M521.30 250V253.2M521.80 250V267.0M522.30 250V260.3M522.80 250V257.6M523.30 250V252.5M523.80 250V253.0M524.30 250V261.7M524.80 250V259.5M525.30 250V261.6M525.80 250V254.0M526.30 250V266.6M526.80 250V262.0M527.30 250V255.7M527.80 250V258.8M528.30 250V266.7M528.80 250V252.5M529.30 250V262.0M529.80 250V252.1M530.30 250V255.4M530.80 250V254.4M531.30 250V253.7M531.80 250V257.9M532.30 250V261.5M532.80 250V265.7M533.30 250V264.3M533.80 250V266.0M534.30 250V253.0M534.80 250V265.9M535.30 250V252.6M535.80 250V256.0M536.30 250V252.4M536.80 250V265.7M537.30 250V256.1M537.80 250V255.8M538.30 250V258.3M538.80 250V259.6M539.30 250V252.8M539.80 250V252.9M540.30 250V259.6M540.80 250V259.9M541.30 250V257.8M541.80 250V254.6M542.30 250V253.0M542.80 250V260.7M543.30 250V253.0M543.80 250V254.1M544.30 250V265.4M544.80 250V265.4M545.30 250V253.7M545.80 250V265.5M546.30 250V262.0M546.80 250V254.1M547.30 250V258.1M547.80 250V254.5M548.30 250V253.7M548.80 250V261.6M549.30 250V253.5M549.80 250V259.7M550.30 250V254.0M550.80 250V257.5M551.30 250V259.5M551.80 250V261.0M552.30 250V256.1M552.80 250V252.8M553.30 250V262.5M553.80 250V254.8M554.30 250V262.0M554.80 250V259.7M555.30 250V261.5M555.80 250V252.8M556.30 250V252.4M556.80 250V253.8M557.30 250V266.6M557.80 250V258.6M558.30 250V252.8M558.80 250V255.2M559.30 250V252.6M559.80 250V254.3M560.30 250V253.3M560.80 250V256.2M561.30 250V255.0M561.80 250V259.1M562.30 250V253.4M562.80 250V261.0M563.30 250V255.6M563.80 250V258.3M564.30 250V254.8M564.80 250V259.3M565.30 250V253.2M565.80 250V258.6M566.30 250V259.1M566.80 250V253.3M567.30 250V253.7M567.80 250V257.5M568.30 250V254.4M568.80 250V255.3M569.30 250V255.5M569.80 250V260.7M570.30 250V256.6M570.80 250V253.6M571.30 250V265.9M571.80 250V254.7M572.30 250V256.8M572.80 250V260.5M573.30 250V252.4M573.80 250V263.9M574.30 250V265.0M574.80 250V256.9M575.30 250V257.6M575.80 250V252.4M576.30 250V258.1M576.80 250V257.8M577.30 250V257.0M577.80 250V265.5M578.30 250V257.5M578.80 250V266.6M579.30 250V265.4M579.80 250V266.3M580.30 250V252.1M580.80 250V266.4M581.30 250V255.9M581.80 250V264.1M582.30 250V261.5M582.80 250V257.0M583.30 250V253.9M583.80 250V252.1M584.30 250V257.8M584.80 250V252.6M585.30 250V259.2M585.80 250V252.6M586.30 250V257.1M586.80 250V252.0M587.30 250V256.0M587.80 250V257.2M588.30 250V265.4M588.80 250V252.2M589.30 250V253.1M589.80 250V258.7M590.30 250V252.5M590.80 250V257.8M591.30 250V259.7M591.80 250V254.9M592.30 250V254.2M592.80 250V264.1M593.30 250V254.1M593.80 250V256.2M594.30 250V256.3M594.80 250V265.5M595.30 250V253.9M595.80 250V258.9M596.30 250V258.5M596.80 250V253.6M597.30 250V253.7M597.80 250V256.9M598.30 250V252.4M598.80 250V252.8M599.30 250V253.8M599.80 250V252.6M600.30 250V259.2M600.80 250V254.3M601.30 250V262.6M601.80 250V253.8M602.30 250V257.9M602.80 250V253.1M603.30 250V257.8M603.80 250V252.4M604.30 250V254.5M604.80 250V260.5M605.30 250V253.6M605.80 250V254.6M606.30 250V254.7M606.80 250V255.5M607.30 250V253.5M607.80 250V252.7M608.30 250V255.6M608.80 250V255.2M609.30 250V266.1M609.80 250V253.4M610.30 250V262.7M610.80 250V256.1M611.30 250V252.5M611.80 250V255.4M612.30 250V253.3M612.80 250V252.7M613.30 250V256.0M613.80 250V259.4M614.30 250V257.8M614.80 250V266.5M615.30 250V253.1M615.80 250V264.8M616.30 250V252.8M616.80 250V256.8M617.30 250V253.5M617.80 250V266.0M618.30 250V261.9M618.80 250V255.4M619.30 250V254.3M619.80 250V253.0M620.30 250V255.3M620.80 250V252.8M621.30 250V252.8M621.80 250V264.0M622.30 250V255.3M622.80 250V258.0M623.30 250V254.9M623.80 250V252.6M624.30 250V263.2M624.80 250V262.4M625.30 250V253.5M625.80 250V260.9M626.30 250V264.5M626.80 250V258.5M627.30 250V258.2M627.80 250V257.4M628.30 250V258.2M628.80 250V253.1M629.30 250V265.4M629.80 250V266.8M630.30 250V258.0M630.80 250V253.4M631.30 250V254.9M631.80 250V256.8M632.30 250V255.2M632.80 250V252.1M633.30 250V260.0M633.80 250V257.5M634.30 250V254.0M634.80 250V257.1M635.30 250V252.1M635.80 250V253.7M636.30 250V252.0M636.80 250V258.8M637.30 250V265.3M637.80 250V256.1M638.30 250V252.3M638.80 250V252.5M639.30 250V259.2M639.80 250V253.1M640.30 250V258.5M640.80 250V253.4M641.30 250V253.2M641.80 250V260.6M642.30 250V252.8M642.80 250V252.6M643.30 250V256.2M643.80 250V253.4M644.30 250V264.8M644.80 250V258.0" stroke="#4267a2" stroke-width="0.8" fill="none"/>
<path d="M89.3 204V256M97.7 199V256M113.5 192.5V256M121.4 204V256M137.2 164V256M420.5 242.6V259" stroke="#e4eaf4" stroke-width="1" fill="none"/>
<path d="M76.3 108.8h1M81.5 108.8h1M87.5 108.8h1M92.7 108.8h1M97.4 108.8h1M102.9 108.8h1M107.6 108.8h1M111.6 108.8h1M116.6 108.8h1M122.4 108.8h1M126.1 108.8h1M132.2 108.8h1M136.2 108.8h1M423.1 108.8h1M429.0 108.8h1M433.3 108.8h1M439.9 108.8h1M444.8 108.8h1M448.9 108.8h1M453.4 108.8h1M458.2 108.8h1" stroke="#7f96c4" stroke-width="1" fill="none"/>
<path d="M72.4 247H645.3" stroke="#8a4878" stroke-width="2" fill="none"/>
<path d="M72.4 107.0V283.5H646.3" stroke="#1a1a1a" stroke-width="2" fill="none"/>
<path d="M73.70 283.5v2.5M87.98 283.5v2.5M102.25 283.5v2.5M116.53 283.5v2.5M130.81 283.5v2.5M145.09 283.5v2.5M159.36 283.5v2.5M173.64 283.5v2.5M187.92 283.5v2.5M202.20 283.5v2.5M216.47 283.5v2.5M230.75 283.5v2.5M245.03 283.5v2.5M259.31 283.5v2.5M273.58 283.5v2.5M287.86 283.5v2.5M302.14 283.5v2.5M316.42 283.5v2.5M330.69 283.5v2.5M344.97 283.5v2.5M359.25 283.5v2.5M373.53 283.5v2.5M387.80 283.5v2.5M402.08 283.5v2.5M416.36 283.5v2.5M430.64 283.5v2.5M444.91 283.5v2.5M459.19 283.5v2.5M473.47 283.5v2.5M487.75 283.5v2.5M502.02 283.5v2.5M516.30 283.5v2.5M530.58 283.5v2.5M544.86 283.5v2.5M559.13 283.5v2.5M573.41 283.5v2.5M587.69 283.5v2.5M601.97 283.5v2.5M616.25 283.5v2.5M630.52 283.5v2.5M644.80 283.5v2.5M72.4 283.50h-2M72.4 276.18h-2M72.4 268.85h-2M72.4 261.52h-2M72.4 254.20h-2M72.4 246.88h-2M72.4 239.55h-2M72.4 232.22h-2M72.4 224.90h-2M72.4 217.57h-2M72.4 210.25h-2M72.4 202.93h-2M72.4 195.60h-2M72.4 188.28h-2M72.4 180.95h-2M72.4 173.62h-2M72.4 166.30h-2M72.4 158.97h-2M72.4 151.65h-2M72.4 144.32h-2M72.4 137.00h-2M72.4 129.68h-2M72.4 122.35h-2M72.4 115.03h-2M72.4 107.70h-2" stroke="#555" stroke-width="1" fill="none"/>
</svg>
<div class="yl" style="top:277.5px">0</div><div class="yl" style="top:262.9px">500</div><div class="yl" style="top:248.2px">1,000</div><div class="yl" style="top:233.6px">1,500</div><div class="yl" style="top:218.9px">2,000</div><div class="yl" style="top:204.2px">2,500</div><div class="yl" style="top:189.6px">3,000</div><div class="yl" style="top:174.9px">3,500</div><div class="yl" style="top:160.3px">4,000</div><div class="yl" style="top:145.7px">4,500</div><div class="yl" style="top:131.0px">5,000</div><div class="yl" style="top:116.3px">5,500</div>
<div class="xl" style="left:629.8px">0</div><div class="xl" style="left:572.7px">10</div><div class="xl" style="left:515.6px">20</div><div class="xl" style="left:458.5px">30</div><div class="xl" style="left:401.4px">40</div><div class="xl" style="left:344.2px">50</div><div class="xl" style="left:287.1px">60</div><div class="xl" style="left:230.0px">70</div><div class="xl" style="left:172.9px">80</div><div class="xl" style="left:115.8px">90</div><div class="xl" style="left:58.7px">100</div>
<div class="xt"><span class="h" style="font-size:8.6px;position:relative;top:0px"><span style="letter-spacing:-0.6px">남</span>은</span> <span class="h" style="font-size:8.6px;position:relative;top:0px"><span style="letter-spacing:-0.6px">용</span>량</span> (%)</div>
<div class="yt"><span class="h" style="font-size:8.6px;position:relative;top:0px"><span style="letter-spacing:-0.5px">속</span>도</span> (MiB/s)</div>
<div class="legend">
 <div class="lgl" style="top:8px;background:#b8c6e0"></div><div class="lg" style="top:4px"><span class="h" style="font-size:8.2px;position:relative;top:0px"><span style="letter-spacing:-0.4px">구</span>간</span> <span class="h" style="font-size:8.2px;position:relative;top:0px"><span style="letter-spacing:-0.4px">속</span>도</span></div>
 <div class="lgl" style="top:19.5px;background:#f0b0b8"></div><div class="lg" style="top:15.5px"><span class="h" style="font-size:8.2px;position:relative;top:0px"><span style="letter-spacing:-0.4px">평</span>균</span> <span class="h" style="font-size:8.2px;position:relative;top:0px"><span style="letter-spacing:-0.4px">속</span>도</span> 50%</div>
</div>
<div class="tab1"><span class="h" style="font-size:10.0px;position:relative;top:0px"><span style="letter-spacing:-0.6px">이</span>전</span> + <span class="h" style="font-size:10.0px;position:relative;top:0px"><span style="letter-spacing:-0.6px">현</span>재</span> <span class="h" style="font-size:10.0px;position:relative;top:0px"><span style="letter-spacing:-0.6px">회</span>차</span></div>
<div class="tab2"><span class="h" style="font-size:10.0px;position:relative;top:0px"><span style="letter-spacing:-0.6px">현</span>재</span> <span class="h" style="font-size:10.0px;position:relative;top:0px"><span style="letter-spacing:-0.6px">회</span>차</span></div>
<div class="text"></div>
<div class="scroll"></div>
<div class="thumb"></div>
<div class="log"><div class="ln">0.8% <span class="h" style="font-size:9.6px;position:relative;top:0px"><span style="letter-spacing:-0.6px">에서</span>의</span> <span class="h" style="font-size:9.6px;position:relative;top:0px"><span style="letter-spacing:-0.6px">속</span>도</span> : 1307MiB/s</div><div class="ln">0.7% <span class="h" style="font-size:9.6px;position:relative;top:0px"><span style="letter-spacing:-0.6px">에서</span>의</span> <span class="h" style="font-size:9.6px;position:relative;top:0px"><span style="letter-spacing:-0.6px">속</span>도</span> : 1550MiB/s</div><div class="ln">0.6% <span class="h" style="font-size:9.6px;position:relative;top:0px"><span style="letter-spacing:-0.6px">에서</span>의</span> <span class="h" style="font-size:9.6px;position:relative;top:0px"><span style="letter-spacing:-0.6px">속</span>도</span> : 1232MiB/s</div><div class="ln">0.5% <span class="h" style="font-size:9.6px;position:relative;top:0px"><span style="letter-spacing:-0.6px">에서</span>의</span> <span class="h" style="font-size:9.6px;position:relative;top:0px"><span style="letter-spacing:-0.6px">속</span>도</span> : 1492MiB/s</div><div class="ln">0.4% <span class="h" style="font-size:9.6px;position:relative;top:0px"><span style="letter-spacing:-0.6px">에서</span>의</span> <span class="h" style="font-size:9.6px;position:relative;top:0px"><span style="letter-spacing:-0.6px">속</span>도</span> : 2386MiB/s</div><div class="ln">0.3% <span class="h" style="font-size:9.6px;position:relative;top:0px"><span style="letter-spacing:-0.6px">에서</span>의</span> <span class="h" style="font-size:9.6px;position:relative;top:0px"><span style="letter-spacing:-0.6px">속</span>도</span> : 1658MiB/s</div><div class="ln">0.2% <span class="h" style="font-size:9.6px;position:relative;top:0px"><span style="letter-spacing:-0.6px">에서</span>의</span> <span class="h" style="font-size:9.6px;position:relative;top:0px"><span style="letter-spacing:-0.6px">속</span>도</span> : 1421MiB/s</div><div class="ln">0.1% <span class="h" style="font-size:9.6px;position:relative;top:0px"><span style="letter-spacing:-0.6px">에서</span>의</span> <span class="h" style="font-size:9.6px;position:relative;top:0px"><span style="letter-spacing:-0.6px">속</span>도</span> : 1252MiB/s</div><div class="ln">0.0% <span class="h" style="font-size:9.6px;position:relative;top:0px"><span style="letter-spacing:-0.6px">에서</span>의</span> <span class="h" style="font-size:9.6px;position:relative;top:0px"><span style="letter-spacing:-0.6px">속</span>도</span> : 2176MiB/s</div><div class="ln ast">***************************************</div><div class="ln"><span class="h" style="font-size:9.6px;position:relative;top:0px"><span style="letter-spacing:-0.6px">종</span>료</span> <span class="h" style="font-size:9.6px;position:relative;top:0px"><span style="letter-spacing:-0.6px">시</span>간</span> : 2024-10-22 16:05</div><div class="ln"><span class="h" style="font-size:9.6px;position:relative;top:0px"><span style="letter-spacing:-0.6px">테스</span>트</span> <span class="h" style="font-size:9.6px;position:relative;top:0px"><span style="letter-spacing:-0.6px">시</span>간</span> : 00:17:00</div><div class="ln ast">***************************************</div><div class="ln"><span class="h" style="font-size:9.6px;position:relative;top:0px"><span style="letter-spacing:-0.6px">최</span>대</span> <span class="h" style="font-size:9.6px;position:relative;top:0px"><span style="letter-spacing:-0.6px">속</span>도</span> : 5946MiB/s</div><div class="ln"><span class="h" style="font-size:9.6px;position:relative;top:0px"><span style="letter-spacing:-0.6px">최</span>소</span> <span class="h" style="font-size:9.6px;position:relative;top:0px"><span style="letter-spacing:-0.6px">속</span>도</span> : 141MiB/s</div><div class="ln"><span class="h" style="font-size:9.6px;position:relative;top:0px"><span style="letter-spacing:-0.6px">평</span>균</span> <span class="h" style="font-size:9.6px;position:relative;top:0px"><span style="letter-spacing:-0.6px">속</span>도</span> : 2488MiB/s</div><div class="ln"><span class="h" style="font-size:9.6px;position:relative;top:0px"><span style="letter-spacing:-0.6px">평</span>균</span> <span class="h" style="font-size:9.6px;position:relative;top:0px"><span style="letter-spacing:-0.6px">속</span>도</span> 50% <span class="h" style="font-size:9.6px;position:relative;top:0px"><span style="letter-spacing:-0.6px">미</span>만</span> <span class="h" style="font-size:9.6px;position:relative;top:0px"><span style="letter-spacing:-0.6px">구</span>간</span> : 3.4%</div><div class="ln ast">***************************************</div></div>
</body></html>
